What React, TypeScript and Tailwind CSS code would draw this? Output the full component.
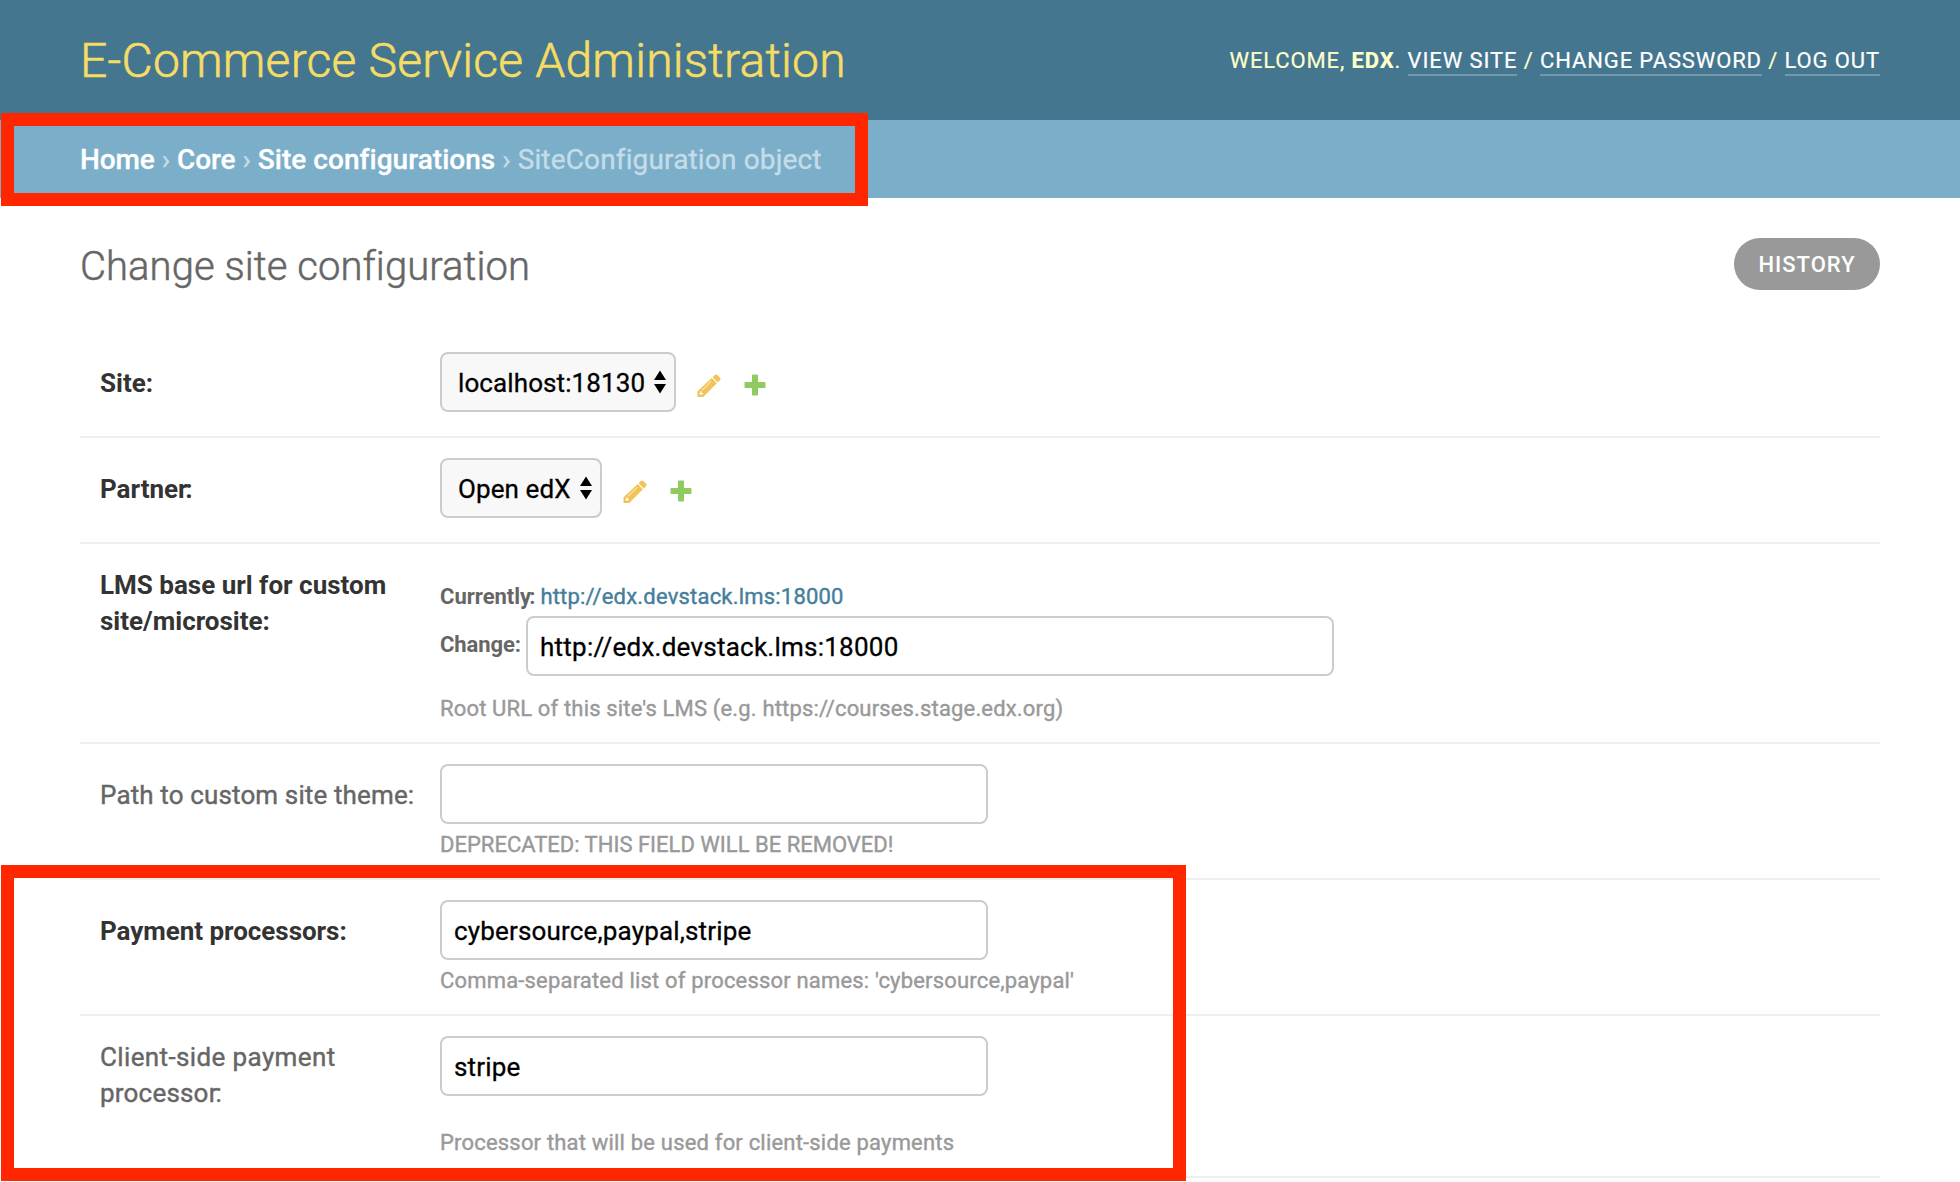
import type { ReactNode } from 'react';

function Pencil() {
  return (
    <svg className="mt-[2px] h-6 w-6" viewBox="0 0 24 24" fill="#f0c457">
      <path d="M15.600 3.200 17.800 1q1.300-1.200 2.600 0l2.500 2.500q1.200 1.400 0 2.700L20.800 8.400z" />
      <path fillRule="evenodd" d="M14.700 4.100 19.900 9.300 6.700 22.400q-.5.600-1.300.6H.500v-4.900q0-.8.600-1.400zM14 6.900 4.900 16.100l.4.400 9.200-9.200zM3.200 17.300v1.700l-.8.800 1.200 1.200.8-.7H6v-1.400H4.600v-1.600z" />
    </svg>
  );
}

function Plus() {
  return (
    <svg className="h-[22px] w-[22px]" viewBox="0 0 22 22" fill="#90cb62">
      <path d="M8.900.5h4.200q.9 0 .9.900V8h6.600q.9 0 .9.900v4.200q0 .9-.9.900H14v6.600q0 .9-.9.900H8.900q-.9 0-.9-.9V14H1.400q-.9 0-.9-.9V8.900q0-.9.900-.9H8V1.400q0-.9.900-.9z" />
    </svg>
  );
}

function Row({ label, strong, className, labelClass, children }: {
  label: ReactNode;
  strong?: boolean;
  className: string;
  labelClass: string;
  children: ReactNode;
}) {
  return (
    <div className={`flex border-b-2 border-[#eee] pl-5 ${className}`}>
      <div
        className={`w-[340px] shrink-0 pr-5 text-[26px] leading-9 ${
          strong ? 'font-bold text-[#333]' : 'text-[#666] [-webkit-text-stroke:0.4px]'
        } ${labelClass}`}
      >
        {label}
      </div>
      <div className="min-w-0 flex-1">{children}</div>
    </div>
  );
}

function SelectBox({ value, className }: { value: string; className: string }) {
  return (
    <div className={`flex h-[60px] items-center rounded-lg border-2 border-[#ccc] bg-[#f8f8f8] pl-4 text-[26px] text-black ${className}`}>
      <span className="mt-[3px] tracking-[0.1px] whitespace-nowrap [-webkit-text-stroke:0.3px]">{value}</span>
      <svg className="mr-2 ml-auto h-6 w-3" viewBox="0 0 12 24">
        <path d="M6 .5 12 10H0zM0 14h12l-6 9.500z" />
      </svg>
    </div>
  );
}

function TextBox({ value, className }: { value?: string; className: string }) {
  return (
    <div className={`flex h-[60px] items-center rounded-lg border-2 border-[#ccc] bg-white pl-3 text-[26px] text-black ${className}`}>
      <span className="mt-[3px] [-webkit-text-stroke:0.3px]">{value}</span>
    </div>
  );
}

function Help({ children, className }: { children: ReactNode; className: string }) {
  return <p className={`text-[22px] leading-[26px] text-[#999] [-webkit-text-stroke:0.4px] ${className}`}>{children}</p>;
}

function RelatedPicker({ value, className }: { value: string; className: string }) {
  return (
    <div className="flex items-center">
      <SelectBox value={value} className={className} />
      <div className="mt-[5px] ml-[21px] flex items-center gap-[23px]">
        <Pencil />
        <Plus />
      </div>
    </div>
  );
}

export default function App() {
  const link = 'border-b-2 border-white/25 pb-px text-white';
  const crumb = 'font-medium text-white [-webkit-text-stroke:0.3px]';
  return (
    <div className="relative h-[1182px] w-[1960px] overflow-hidden bg-white font-['Roboto',sans-serif] text-[#666]">
      <header className="flex h-[120px] items-center justify-between bg-[#44768f] px-20">
        <h1 className="mt-[2px] text-[48px] leading-none font-light tracking-[0.22px] text-[#f5dc65] [-webkit-text-stroke:0.6px]">
          E-Commerce Service Administration
        </h1>
        <div className="text-[22px] tracking-[0.88px] text-[#ffffcc] [-webkit-text-stroke:0.2px]">
          WELCOME, <b className="font-bold">EDX</b>. <a className={link}>VIEW SITE</a> / <a className={link}>CHANGE PASSWORD</a> /{' '}
          <a className={link}>LOG OUT</a>
        </div>
      </header>
      <nav className="flex h-[78px] items-center bg-[#7baec8] px-20 text-[28px] text-[#c4dce8] [-webkit-text-stroke:0.4px]">
        <div className="mt-[2px]">
          <a className={`${crumb} tracking-[-0.1px]`}>Home</a> › <a className={`${crumb} tracking-[-0.1px]`}>Core</a> ›{' '}
          <a className={`${crumb} tracking-[0.04px]`}>Site configurations</a> › <span className="tracking-[0.15px]">SiteConfiguration object</span>
        </div>
      </nav>
      <main className="px-20">
        <div className="flex h-[134px] items-start justify-between pt-10">
          <h2 className="mt-1 text-[40px] leading-[50px] font-light tracking-[0.06px] text-[#666] [-webkit-text-stroke:0.5px]">
            Change site configuration
          </h2>
          <button className="flex h-[52px] w-[146px] items-center justify-center rounded-[30px] bg-[#999] pt-px text-[22px] font-medium tracking-[1px] text-white">
            HISTORY
          </button>
        </div>
        <Row label="Site:" strong className="h-[106px] pt-5" labelClass="mt-[13px]">
          <RelatedPicker value="localhost:18130" className="w-[236px]" />
        </Row>
        <Row label={<>Partne<span className="tracking-[-2.5px]">r:</span></>} strong className="h-[106px] pt-5" labelClass="mt-[13px]">
          <RelatedPicker value="Open edX" className="w-[162px]" />
        </Row>
        <Row label="LMS base url for custom site/microsite:" strong className="h-[200px] pt-5" labelClass="mt-[3px]">
          <div className="mt-[15px] text-[22px] leading-9">
            <b>Currentl<span className="tracking-[-2px]">y:</span></b>
            <a className="ml-[7px] tracking-[0.2px] text-[#447e9b] [-webkit-text-stroke:0.4px]">http://edx.devstack.lms:18000</a>
          </div>
          <div className="mt-px flex items-center text-[22px]">
            <b className="-mt-[4px] w-[86px] tracking-[-0.1px]">Change:</b>
            <TextBox value="http://edx.devstack.lms:18000" className="w-[808px] tracking-[0.24px]" />
          </div>
          <Help className="mt-5 tracking-[0.16px]">Root URL of this site's LMS (e.g. https://courses.stage.edx.org)</Help>
        </Row>
        <Row label="Path to custom site theme:" className="h-[136px] pt-5" labelClass="mt-[13px] tracking-[0.13px]">
          <TextBox className="w-[548px]" />
          <Help className="mt-[8px]">DEPRECATED: THIS FIELD WILL BE REMOVED!</Help>
        </Row>
        <Row label="Payment processors:" strong className="h-[136px] pt-5" labelClass="mt-[13px] tracking-[-0.04px]">
          <TextBox value="cybersource,paypal,stripe" className="w-[548px] tracking-[0.17px]" />
          <Help className="mt-[8px] tracking-[0.18px]">Comma-separated list of processor names: 'cybersource,paypal'</Help>
        </Row>
        <Row
          label={
            <>
              <div className="tracking-[0.38px]">Client-side payment</div>
              <div className="tracking-[0.2px]">processo<span className="tracking-[-2px]">r:</span></div>
            </>
          }
          className="h-[162px] pt-5"
          labelClass="mt-[3px]"
        >
          <TextBox value="stripe" className="w-[548px] tracking-[0.17px]" />
          <Help className="mt-[34px] tracking-[0.19px]">Processor that will be used for client-side payments</Help>
        </Row>
      </main>
      <div className="absolute top-[113px] left-px h-[93px] w-[867px] border-[13px] border-[#ff2600]" />
      <div className="absolute top-[865px] left-px h-[316px] w-[1185px] border-[13px] border-[#ff2600]" />
    </div>
  );
}
